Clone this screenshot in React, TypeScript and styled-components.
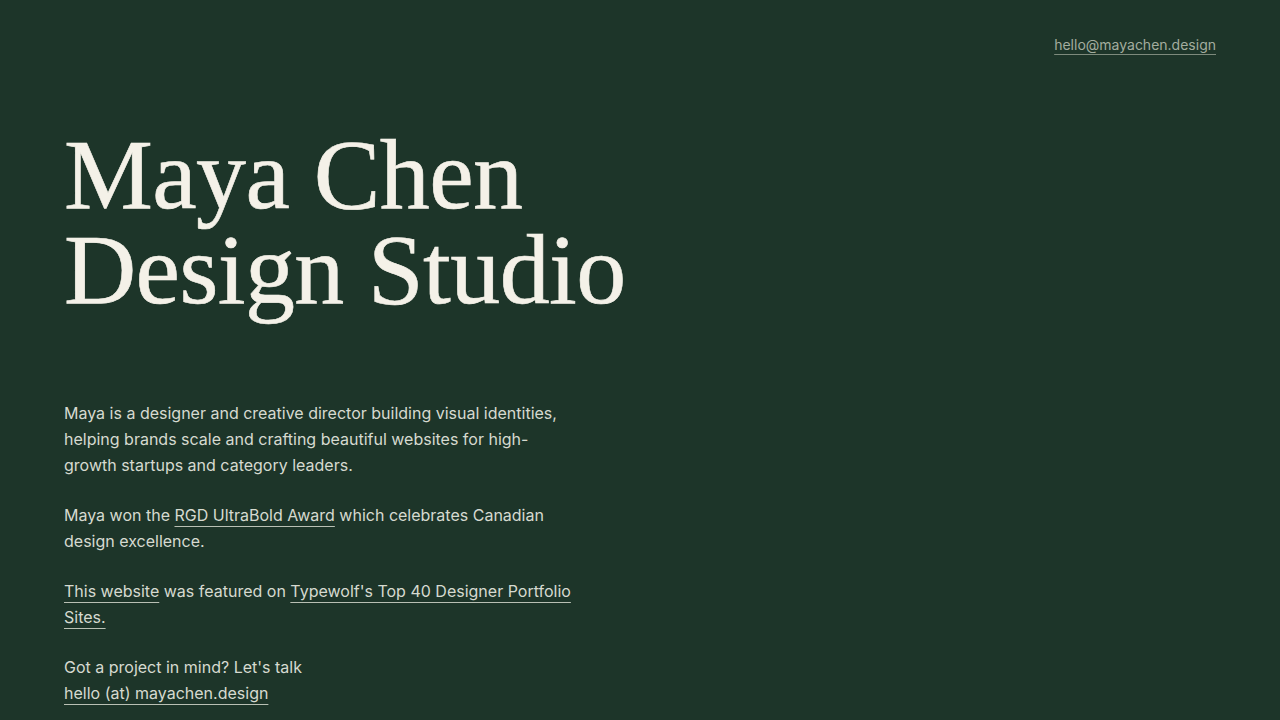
import React from "react";
import styled, { createGlobalStyle } from "styled-components";

const GlobalStyle = createGlobalStyle`
  html, body {
    margin: 0;
    padding: 0;
    background: #1d3529;
  }
  * { box-sizing: border-box; }
`;

const Page = styled.div`
  min-height: 100vh;
  background: #1d3529;
  color: #d6dad0;
  font-family: Inter, "Noto Sans", sans-serif;
  padding: 0 64px;
`;

const TopBar = styled.header`
  display: flex;
  justify-content: flex-end;
  padding-top: 35px;
`;

const MailLink = styled.a`
  font-size: 14px;
  line-height: 20px;
  color: #a3ad9f;
  text-decoration: underline;
  text-decoration-color: #7d8a7c;
  text-decoration-thickness: 1px;
  text-underline-offset: 4px;
`;

const Title = styled.h1`
  margin: 72px 0 0;
  font-family: "Liberation Serif", "DejaVu Serif", serif;
  font-weight: 400;
  font-size: 100px;
  line-height: 95px;
  letter-spacing: -0.6px;
  color: #f4f1e8;
  -webkit-text-stroke: 0.6px #f4f1e8;
`;

const Body = styled.section`
  max-width: 514px;
  margin-top: 83px;
`;

const Para = styled.p`
  margin: 0 0 24px;
  font-size: 16px;
  line-height: 26px;
`;

const Link = styled.a`
  color: inherit;
  text-decoration: underline;
  text-decoration-color: #b9c0b4;
  text-decoration-thickness: 1px;
  text-underline-offset: 5px;
`;

export default function App() {
  return (
    <>
      <GlobalStyle />
      <Page>
        <TopBar>
          <MailLink href="#">hello@mayachen.design</MailLink>
        </TopBar>
        <Title>
          Maya Chen
          <br />
          Design Studio
        </Title>
        <Body>
          <Para>
            Maya is a designer and creative director building visual identities,
            helping brands scale and crafting beautiful websites for high-growth
            startups and category leaders.
          </Para>
          <Para>
            Maya won the <Link href="#">RGD UltraBold Award</Link> which
            celebrates Canadian design excellence.
          </Para>
          <Para>
            <Link href="#">This website</Link> was featured on{" "}
            <Link href="#">Typewolf's Top 40 Designer Portfolio Sites.</Link>
          </Para>
          <Para>
            Got a project in mind? Let's talk
            <br />
            <Link href="#">hello (at) mayachen.design</Link>
          </Para>
        </Body>
      </Page>
    </>
  );
}
